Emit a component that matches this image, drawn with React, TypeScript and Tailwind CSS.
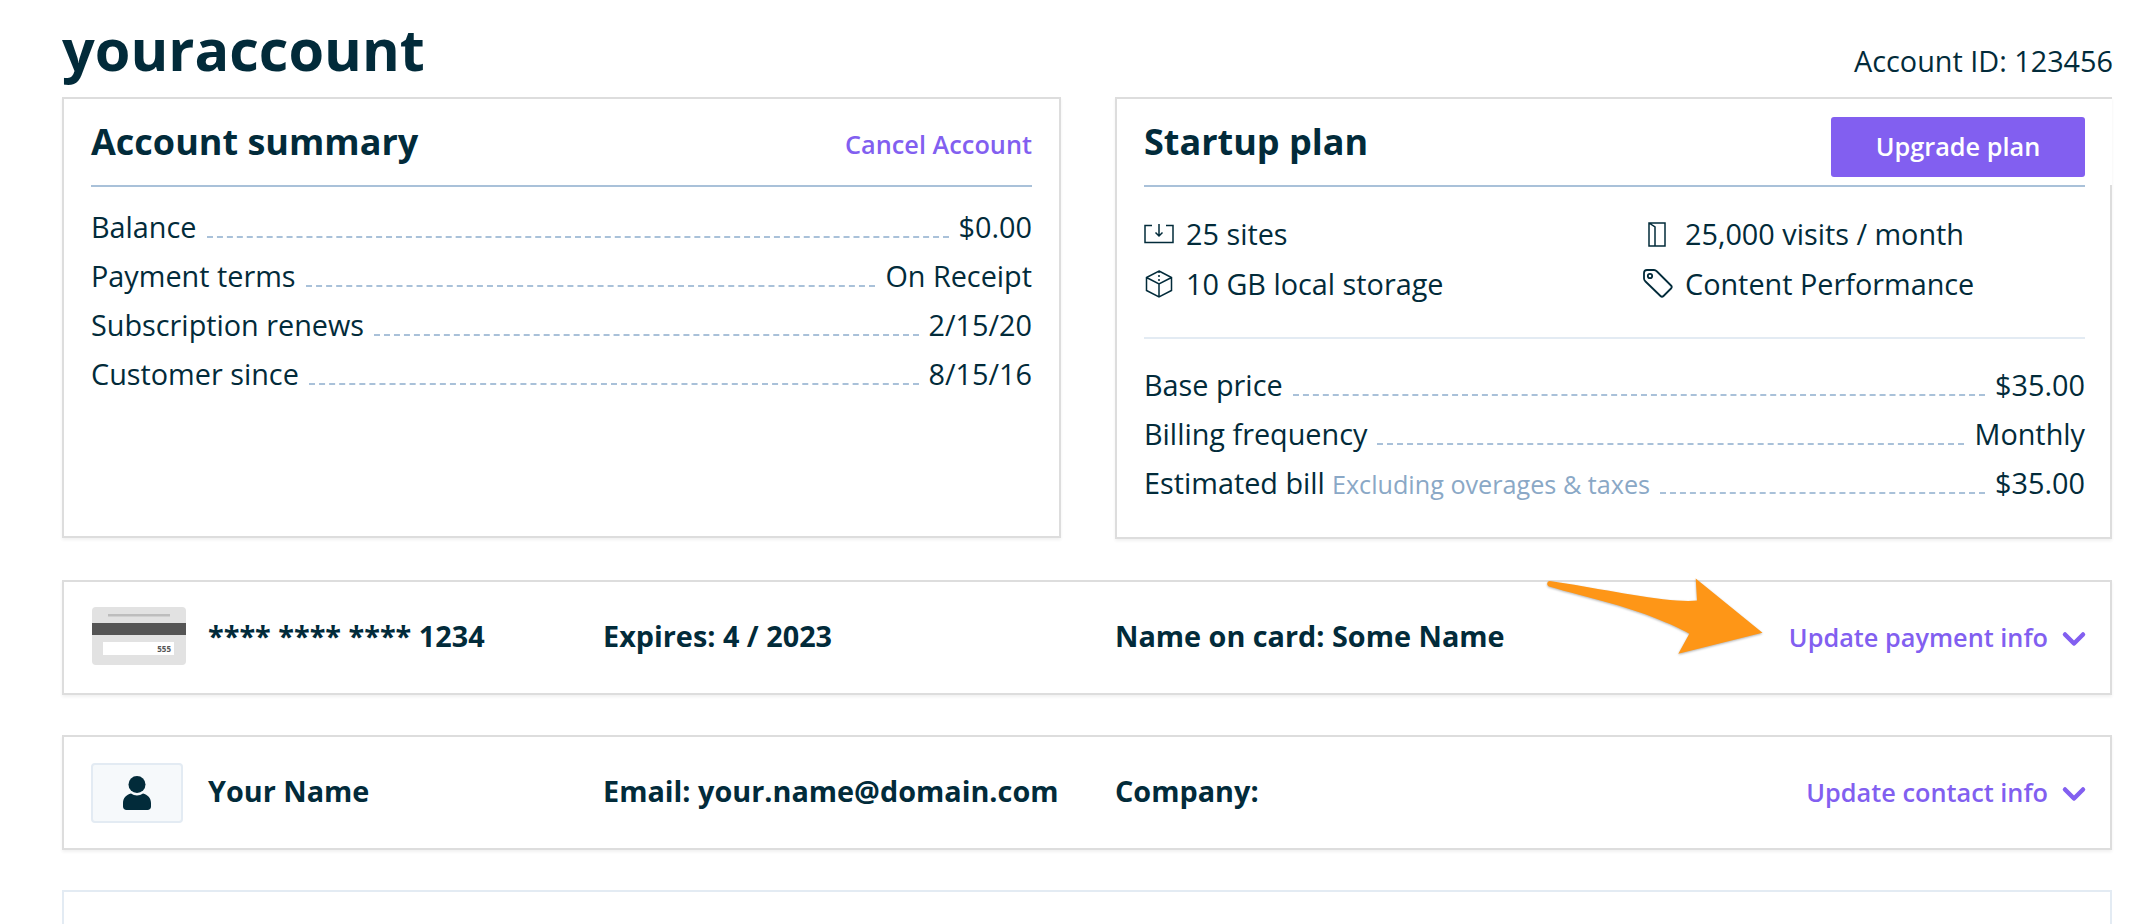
import { ChevronDown } from "lucide-react";

const ink = "#022b3a";

const Leader = () => <span className="flex-1 mx-[10px] border-b-2 border-dashed border-[#a9c1d9]" />;

const Line = ({ label, note, value }: { label: string; note?: string; value: string }) => (
  <div className="flex items-baseline h-[49px] leading-[49px]">
    <span>{label}</span>
    {note && <span className="ml-[7px] text-[25.2px] text-[#8aa8c6]">{note}</span>}
    <Leader />
    <span>{value}</span>
  </div>
);

const CardImage = () => (
  <svg className="w-[94px] h-[58px] shrink-0 ml-[1px] mt-[-3px]" viewBox="0 0 94 58">
    <rect x="0" y="0" width="94" height="58" rx="4" fill="#e2e2e2" />
    <rect x="16" y="7" width="62" height="2.500" fill="#bdbdbd" />
    <rect x="0" y="16" width="94" height="12" fill="#555555" />
    <rect x="11" y="35" width="71" height="13" fill="#ffffff" />
    <text x="79" y="45" textAnchor="end" fontSize="8" fill="#555555" fontFamily="'Open Sans', sans-serif">555</text>
  </svg>
);

const PersonImage = () => (
  <div className="w-[92px] h-[60px] shrink-0 flex items-center justify-center rounded-[4px] border-2 border-[#e3ebf3] bg-[#f6f9fb]">
    <svg className="w-[28px] h-[34px]" viewBox="0 0 28 34" fill={ink}>
      <circle cx="14" cy="8.5" r="8.5" />
      <path d="M8 17.5c3.500 2.600 8.500 2.600 12 0 4.500 1 8 4.500 8 9.500v3.500c0 2-1.500 3.500-3.500 3.500h-21C1.500 34 0 32.500 0 30.500V27c0-5 3.500-8.500 8-9.500z" />
    </svg>
  </div>
);

const Row = ({ image, first, second, third, link, children }: { image: React.ReactNode; first: string; second: string; third: string; link: string; children?: React.ReactNode }) => (
  <div className="relative flex items-center h-[115px] pl-[27px] pr-[25px] border-2 border-[#dddddd] bg-white shadow-[0_2px_3px_rgba(0,0,0,0.06)] font-bold">
    <div className="w-[117px] shrink-0">{image}</div>
    <div className="w-[395px] shrink-0 pb-[3px]">{first}</div>
    <div className="w-[512px] shrink-0 pb-[3px]">{second}</div>
    <div className="pb-[3px]">{third}</div>
    <div className="ml-auto flex items-center gap-[8px] text-[25.3px] font-semibold text-[#825ff0]">
      {link}
      <ChevronDown className="mr-[-7px] mt-[3px]" size={36} strokeWidth={3} />
    </div>
    {children}
  </div>
);

export default function App() {
  return (
    <div className="h-[924px] overflow-hidden bg-white pl-[62px] pr-[39px] text-[28.8px] text-[#022b3a] font-['Open_Sans',sans-serif]">
      <header className="flex justify-between items-start h-[97px]">
        <h1 className="mt-[20px] text-[57.6px] font-bold leading-none">youraccount</h1>
        <span className="mt-[39px] mr-[-1px]">Account ID: 123456</span>
      </header>

      <div className="flex justify-between">
        <section className="w-[999px] h-[441px] px-[27px] border-2 border-[#dddddd] shadow-[0_2px_3px_rgba(0,0,0,0.06)]">
          <div className="flex justify-between items-center h-[88px] border-b-2 border-[#a9c1d9]">
            <h2 className="text-[36px] font-bold">Account summary</h2>
            <a className="text-[25.3px] font-semibold text-[#825ff0] pt-[6px]">Cancel Account</a>
          </div>
          <div className="pt-[15px]">
            <Line label="Balance" value="$0.00" />
            <Line label="Payment terms" value="On Receipt" />
            <Line label="Subscription renews" value="2/15/20" />
            <Line label="Customer since" value="8/15/16" />
          </div>
        </section>

        <section className="relative w-[997px] h-[442px] pl-[27px] pr-[25px] border-2 border-[#dddddd] shadow-[0_2px_3px_rgba(0,0,0,0.06)]">
          <span className="absolute top-0 right-[-2px] w-[4px] h-[86px] bg-white" />
          <div className="flex justify-between items-center h-[88px] border-b-2 border-[#a9c1d9]">
            <h2 className="text-[36px] font-bold">Startup plan</h2>
            <button className="w-[254px] h-[60px] mt-[10px] rounded-[3px] bg-[#825ff0] text-[25.3px] font-semibold text-white">Upgrade plan</button>
          </div>
          <div className="grid grid-cols-[499px_1fr] pt-[22px] pb-[28px] border-b-2 border-[#e3ebf3]">
            <Feature icon={<SitesIcon />} text="25 sites" />
            <Feature icon={<VisitsIcon />} text="25,000 visits / month" />
            <Feature icon={<BoxIcon />} text="10 GB local storage" />
            <Feature icon={<TagIcon />} text="Content Performance" />
          </div>
          <div className="pt-[21px]">
            <Line label="Base price" value="$35.00" />
            <Line label="Billing frequency" value="Monthly" />
            <Line label="Estimated bill" note="Excluding overages & taxes" value="$35.00" />
          </div>
        </section>
      </div>

      <div className="mt-[41px] flex flex-col gap-[40px]">
        <Row image={<CardImage />} first="**** **** **** 1234" second="Expires: 4 / 2023" third="Name on card: Some Name" link="Update payment info">
          <svg className="absolute left-[1483px] top-[-4px] w-[218px] h-[80px] overflow-visible drop-shadow-[0_1px_1px_rgba(0,0,0,0.3)]" viewBox="0 0 218 80">
            <path d="M3 3C45 9 95 20 130 22.500c8 .5 15 .5 20 0L148.700 .5l66.800 54.200-84.200 21 11-20C125 46 95 34 66 26 45 20 20 14 2 8.500-1 7 0 3 3 3z" fill="#fe9617" />
          </svg>
        </Row>
        <Row image={<PersonImage />} first="Your Name" second="Email: your.name@domain.com" third="Company:" link="Update contact info" />
        <div className="h-[100px] border-2 border-[#e3ebf3]" />
      </div>
    </div>
  );
}

const Feature = ({ icon, text }: { icon: React.ReactNode; text: string }) => (
  <div className="flex items-center h-[50px]">
    <span className="w-[42px] shrink-0">{icon}</span>
    {text}
  </div>
);

const iconStroke = { fill: "none", stroke: ink, strokeWidth: 1.5 };

const SitesIcon = () => (
  <svg width="30" height="20" viewBox="0 0 30 20" {...iconStroke}>
    <path d="M8 1.500H1v17h28v-17h-7" />
    <path d="M15 0v12M11.500 8.500L15 12l3.500-3.500" />
  </svg>
);

const VisitsIcon = () => (
  <svg className="ml-[5px]" width="18" height="25" viewBox="0 0 18 25" {...iconStroke}>
    <path d="M1 24V1h16v23zM1 1l6 4v19" />
  </svg>
);

const BoxIcon = () => (
  <svg className="ml-[1px]" width="28" height="28" viewBox="0 0 28 28" {...iconStroke}>
    <path d="M14 1l12.500 6.500v13L14 27 1.500 20.500v-13zM1.500 7.500L14 14l12.500-6.500M14 14v13" />
    <path d="M14 1v13" strokeDasharray="2 2" />
  </svg>
);

const TagIcon = () => (
  <svg width="30" height="30" viewBox="0 0 30 30" {...iconStroke} strokeWidth={1.8}>
    <path d="M1 4c0-2 1-3 3-3h7c1 0 2 .5 3 1.500l14 14c1 1 1 2 0 3l-7.500 7.500c-1 1-2 1-3 0L2.500 12.500C1.500 11.500 1 10.500 1 9.500z" />
    <circle cx="7" cy="7" r="2.200" />
  </svg>
);
